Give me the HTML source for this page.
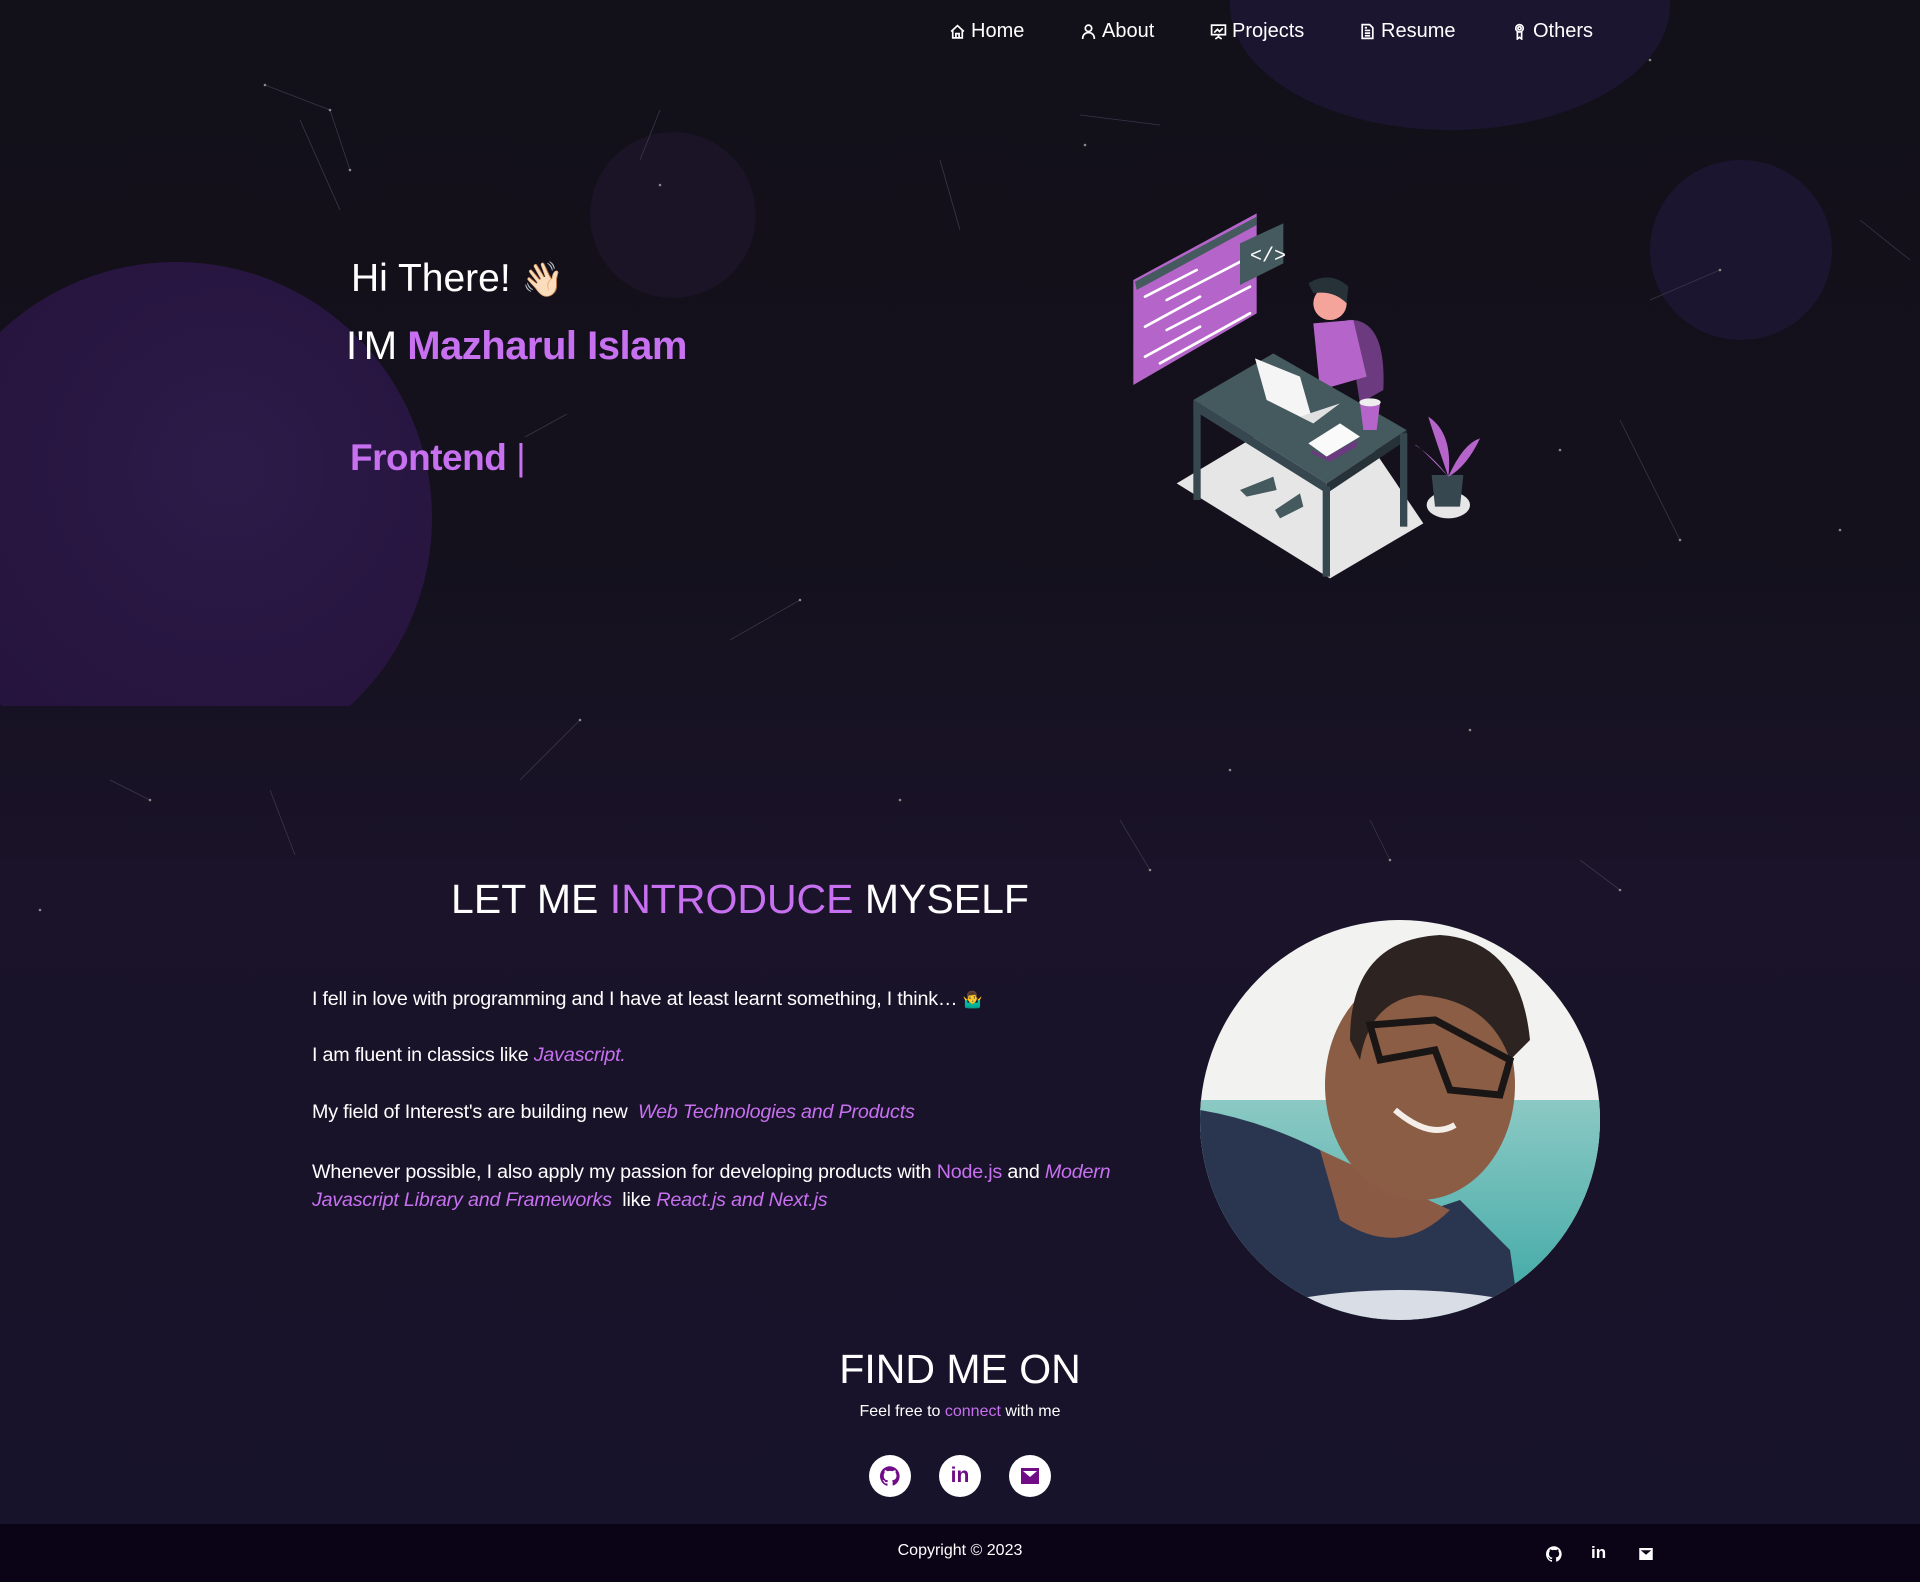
<!DOCTYPE html>
<html><head><meta charset="utf-8">
<style>
*{margin:0;padding:0;box-sizing:border-box}
html,body{width:1920px;height:1582px;overflow:hidden}
body{font-family:"Liberation Sans",sans-serif;color:#fff;position:relative;
background:linear-gradient(180deg,#121018 0%,#14111d 35%,#1a1329 55%,#181329 75%,#17132a 100%);}
.abs{position:absolute}
.p{color:#c770f0}
nav{position:absolute;top:20px;left:0;width:1920px;height:26px;font-size:20px}
nav a{position:absolute;top:0;color:#fff;text-decoration:none;display:flex;align-items:center;gap:5px;white-space:nowrap}
nav svg{width:17px;height:17px;stroke:#fff;fill:none;stroke-width:1.6}
.para{position:absolute;left:312px;font-size:19.7px;white-space:nowrap;letter-spacing:-0.2px}
.para i{color:#c770f0}
.ic{position:absolute;width:42px;height:42px;border-radius:50%;background:#fff;top:1455px;display:flex;align-items:center;justify-content:center}
</style></head><body>

<div class="abs" style="left:0;top:0;width:1920px;height:706px;overflow:hidden">
  <div class="abs" style="left:-80px;top:262px;width:512px;height:512px;border-radius:50%;background:radial-gradient(circle at 60% 40%,#2c1a48,#27153f 60%,#22123a)"></div>
  <div class="abs" style="left:590px;top:132px;width:166px;height:166px;border-radius:50%;background:#1a1426"></div>
  <div class="abs" style="left:1230px;top:-120px;width:440px;height:250px;border-radius:50%;background:#1b1530"></div>
  <div class="abs" style="left:1650px;top:160px;width:182px;height:180px;border-radius:50%;background:#1b1530"></div>
</div>

<svg class="abs" style="left:0;top:0" width="1920" height="1582" stroke="#3a3648" stroke-width="0.8" fill="#888">
<g>
<line x1="265" y1="85" x2="330" y2="110"/><line x1="330" y1="110" x2="350" y2="170"/><line x1="300" y1="120" x2="340" y2="210"/>
<line x1="660" y1="110" x2="640" y2="160"/><line x1="940" y1="160" x2="960" y2="230"/><line x1="1080" y1="115" x2="1160" y2="125"/>
<line x1="1650" y1="300" x2="1720" y2="270"/><line x1="1620" y1="420" x2="1680" y2="540"/><line x1="730" y1="640" x2="800" y2="600"/>
<line x1="520" y1="780" x2="580" y2="720"/><line x1="1120" y1="820" x2="1150" y2="870"/><line x1="1370" y1="820" x2="1390" y2="860"/>
<line x1="1580" y1="860" x2="1620" y2="890"/><line x1="110" y1="780" x2="150" y2="800"/><line x1="270" y1="790" x2="295" y2="855"/>
<line x1="525" y1="437" x2="567" y2="414"/><line x1="1860" y1="220" x2="1910" y2="260"/>
</g>
<g stroke="none">
<circle cx="265" cy="85" r="1.3"/><circle cx="330" cy="110" r="1.3"/><circle cx="350" cy="170" r="1.3"/><circle cx="660" cy="185" r="1.3"/>
<circle cx="1085" cy="145" r="1.3"/><circle cx="1720" cy="270" r="1.3"/><circle cx="1680" cy="540" r="1.3"/><circle cx="800" cy="600" r="1.3"/>
<circle cx="580" cy="720" r="1.3"/><circle cx="1150" cy="870" r="1.3"/><circle cx="1390" cy="860" r="1.3"/><circle cx="1620" cy="890" r="1.3"/>
<circle cx="150" cy="800" r="1.3"/><circle cx="40" cy="910" r="1.3"/><circle cx="1560" cy="450" r="1.3"/><circle cx="1840" cy="530" r="1.3"/>
<circle cx="1470" cy="730" r="1.3"/><circle cx="900" cy="800" r="1.3"/><circle cx="1230" cy="770" r="1.3"/><circle cx="1650" cy="60" r="1.3"/>
</g>
</svg>

<nav>
<a style="left:949px"><svg viewBox="0 0 16 16"><path d="M2 8L8 2.5 14 8M3.5 7v7h9V7M6.5 14v-4h3v4"/></svg>Home</a>
<a style="left:1080px"><svg viewBox="0 0 16 16"><circle cx="8" cy="5" r="3"/><path d="M2.5 15c0-4 2.5-6 5.5-6s5.5 2 5.5 6"/></svg>About</a>
<a style="left:1210px"><svg viewBox="0 0 16 16"><rect x="1.5" y="2" width="13" height="9"/><path d="M4 9l3-3 2 2 3-3M8 11v2M5 15l3-2 3 2"/></svg>Projects</a>
<a style="left:1359px"><svg viewBox="0 0 16 16"><path d="M3 1.5h7l3 3v10H3z M5.5 7h5M5.5 9.5h5M5.5 12h5M5.5 4.5h2"/></svg>Resume</a>
<a style="left:1511px"><svg viewBox="0 0 16 16"><circle cx="8" cy="5" r="3.5"/><circle cx="8" cy="5" r="1.5"/><path d="M6 8.5V15l2-1.5 2 1.5V8.5"/></svg>Others</a>
</nav>

<div class="abs" style="left:351px;top:252px;font-size:39px;white-space:nowrap">Hi There! <span style="font-family:'Noto Sans CJK JP',sans-serif;font-size:34px">👋🏻</span></div>
<div class="abs" style="left:346px;top:324px;font-size:40px;white-space:nowrap;letter-spacing:-0.5px">I'M <span class="p" style="font-weight:bold">Mazharul Islam</span></div>
<div class="abs" style="left:350px;top:437px;font-size:37px;font-weight:bold;color:#c770f0;white-space:nowrap;letter-spacing:-0.5px">Frontend <span style="font-weight:normal">|</span></div>

<svg class="abs" style="left:1100px;top:190px" width="420" height="400" viewBox="0 0 1260 1200">
<polygon points="230,880 700,600 970,1000 690,1165" fill="#e6e6e6"/>
<polygon points="100,270 470,70 470,370 100,585" fill="#b565c9"/>
<polygon points="105,275 470,80 470,105 110,300" fill="#455a5f"/>
<g stroke="#fff" stroke-width="8" stroke-linecap="round">
<line x1="135" y1="320" x2="290" y2="240"/><line x1="200" y1="330" x2="450" y2="200"/><line x1="135" y1="410" x2="300" y2="320"/>
<line x1="200" y1="420" x2="450" y2="290"/><line x1="135" y1="500" x2="300" y2="410"/><line x1="180" y1="520" x2="450" y2="370"/>
</g>
<polygon points="420,160 550,100 550,220 420,285" fill="#455a5f"/>
<text x="450" y="215" fill="#fff" font-size="60" font-family="Liberation Mono">&lt;/&gt;</text>
<path d="M740 390 Q860 380 850 600 L780 640 Z" fill="#6b3a7f"/>
<polygon points="640,400 760,390 800,560 660,600" fill="#b565c9"/>
<circle cx="690" cy="340" r="50" fill="#f4a49b"/>
<path d="M625 280 Q690 240 745 290 L740 340 Q700 300 640 310Z" fill="#263238"/>
<polygon points="280,630 520,490 920,720 680,880" fill="#455a5f"/>
<polygon points="280,630 680,880 680,910 280,660" fill="#37474f"/>
<polygon points="680,880 920,720 920,750 680,910" fill="#263238"/>
<rect x="280" y="640" width="22" height="290" fill="#37474f"/>
<rect x="668" y="890" width="22" height="270" fill="#37474f"/>
<rect x="900" y="730" width="22" height="280" fill="#37474f"/>
<polygon points="465,505 600,560 640,700 500,630" fill="#f5f5f5"/>
<polygon points="600,680 720,640 640,700" fill="#e0e0e0"/>
<path d="M780 640 L840 640 L830 720 L790 720Z" fill="#b565c9"/>
<ellipse cx="810" cy="637" rx="32" ry="12" fill="#eee"/>
<polygon points="625,760 720,700 780,740 680,800" fill="#fafafa"/>
<polygon points="635,780 680,800 770,750 770,770 690,815 635,790" fill="#6b3a7f"/>
<ellipse cx="1045" cy="945" rx="65" ry="40" fill="#e6e6e6"/>
<path d="M995 855 L1090 855 L1080 950 L1005 950Z" fill="#37474f"/>
<path d="M1045 860 Q950 760 945 765 Q1000 800 1045 860 M1045 860 Q990 700 985 680 Q1060 730 1045 860 M1045 860 Q1090 760 1140 745 Q1100 830 1045 860" fill="#b565c9"/>
<path d="M420 900 L520 860 L530 900 L440 920Z M525 960 L600 910 L610 950 L540 985Z" fill="#455a5f"/>
</svg>

<div class="abs" style="left:0;width:1480px;top:876px;text-align:center;font-size:41px;white-space:nowrap">LET ME <span class="p">INTRODUCE</span> MYSELF</div>

<div class="para" style="top:986px">I fell in love with programming and I have at least learnt something, I think… <span style="font-family:'Noto Sans CJK JP',sans-serif;font-size:16px">🤷‍♂️</span></div>
<div class="para" style="top:1044px">I am fluent in classics like <i>Javascript.</i></div>
<div class="para" style="top:1101px">My field of Interest's are building new &nbsp;<i>Web Technologies and Products</i></div>
<div class="para" style="top:1158px;line-height:28px">Whenever possible, I also apply my passion for developing products with <span class="p">Node.js</span> and <i>Modern</i><br><i>Javascript Library and Frameworks</i> &nbsp;like <i>React.js and Next.js</i></div>

<svg class="abs" style="left:1200px;top:920px" width="400" height="400" viewBox="0 0 400 400">
<defs><clipPath id="c"><circle cx="200" cy="200" r="200"/></clipPath>
<linearGradient id="sea" x1="0" y1="0" x2="0" y2="1"><stop offset="0" stop-color="#8cc9c4"/><stop offset="1" stop-color="#3aa7a4"/></linearGradient></defs>
<g clip-path="url(#c)">
<rect width="400" height="400" fill="#f2f3f1"/>
<rect x="0" y="180" width="400" height="220" fill="url(#sea)"/>
<path d="M0 190 Q60 200 120 230 L200 300 L260 280 L310 330 L320 400 L0 400Z" fill="#2a3550"/>
<path d="M120 230 L140 300 Q200 340 250 290Z" fill="#8a5a45"/>
<ellipse cx="220" cy="165" rx="95" ry="115" fill="#8b5d45"/>
<path d="M150 120 Q150 20 240 15 Q320 20 330 120 L310 140 Q290 80 220 75 Q170 80 160 140Z" fill="#2d2320"/>
<path d="M170 105 L235 100 L310 140 L300 175 L250 170 L235 130 L180 140Z" fill="none" stroke="#1a1616" stroke-width="7"/>
<path d="M195 190 Q230 220 255 205" stroke="#f5eee8" stroke-width="6" fill="none"/>
<path d="M80 400 L320 400 L310 380 Q200 360 90 380Z" fill="#d8dde6"/>
</g>
</svg>

<div class="abs" style="left:0;width:1920px;top:1346px;text-align:center;font-size:41px">FIND ME ON</div>
<div class="abs" style="left:0;width:1920px;top:1403px;text-align:center;font-size:16px">Feel free to <span class="p">connect</span> with me</div>

<div class="ic" style="left:869px"><svg width="20" height="20" viewBox="0 0 16 16"><path fill="#700c86" d="M8 .2a8 8 0 0 0-2.5 15.6c.4 0 .5-.2.5-.4v-1.5c-2.2.5-2.7-1-2.7-1-.4-.9-.9-1.2-.9-1.2-.7-.5.1-.5.1-.5.8.1 1.2.8 1.2.8.7 1.3 1.9.9 2.4.7 0-.5.3-.9.5-1.1-1.800-.2-3.600-.9-3.600-4 0-.9.3-1.6.8-2.1-.1-.2-.4-1 .1-2.1 0 0 .7-.2 2.2.8a7.5 7.5 0 0 1 4 0c1.5-1 2.2-.8 2.2-.8.4 1.1.2 1.9.1 2.1.5.6.8 1.3.8 2.1 0 3.1-1.9 3.7-3.6 3.9.3.3.5.8.5 1.5v2.2c0 .2.1.5.6.4A8 8 0 0 0 8 .2z"/></svg></div>
<div class="ic" style="left:939px;color:#700c86;font-weight:bold;font-size:21px">in</div>
<div class="ic" style="left:1009px"><svg width="18" height="16" viewBox="0 0 18 16"><rect width="18" height="16" fill="#700c86"/><path d="M2 3h14L9 9z" fill="#fff"/></svg></div>

<div class="abs" style="left:0;top:1524px;width:1920px;height:58px;background:#0a0416"></div>
<div class="abs" style="left:0;width:1920px;top:1542px;text-align:center;font-size:16px">Copyright © 2023</div>
<svg class="abs" style="left:1546px;top:1546px" width="16" height="16" viewBox="0 0 16 16"><path fill="#fff" d="M8 .2a8 8 0 0 0-2.5 15.6c.4 0 .5-.2.5-.4v-1.5c-2.2.5-2.7-1-2.7-1-.4-.9-.9-1.2-.9-1.2-.7-.5.1-.5.1-.5.8.1 1.2.8 1.2.8.7 1.3 1.9.9 2.4.7 0-.5.3-.9.5-1.1-1.8-.2-3.6-.9-3.6-4 0-.9.3-1.6.8-2.1-.1-.2-.4-1 .1-2.1 0 0 .7-.2 2.2.8a7.5 7.5 0 0 1 4 0c1.5-1 2.2-.8 2.2-.8.4 1.1.2 1.9.1 2.1.5.6.8 1.3.8 2.1 0 3.1-1.9 3.7-3.6 3.9.3.3.5.8.5 1.5v2.2c0 .2.1.5.6.4A8 8 0 0 0 8 .2z"/></svg>
<div class="abs" style="left:1591px;top:1543px;font-size:17px;font-weight:bold">in</div>
<svg class="abs" style="left:1639px;top:1548px" width="14" height="12" viewBox="0 0 18 16"><rect width="18" height="16" fill="#fff"/><path d="M2 3h14L9 9z" fill="#0a0416"/></svg>

</body></html>
